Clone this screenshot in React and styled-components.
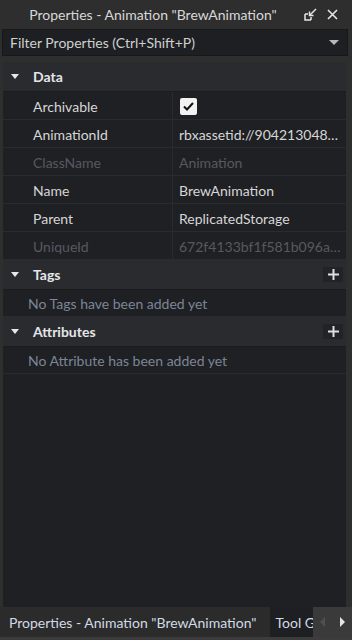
import React from 'react';
import styled, { createGlobalStyle } from 'styled-components';

const GlobalStyle = createGlobalStyle`
  html, body {
    margin: 0;
    padding: 0;
    background: #2e2e2e;
  }
  * {
    box-sizing: border-box;
  }
`;

const Panel = styled.div`
  width: 352px;
  height: 640px;
  display: flex;
  flex-direction: column;
  background: #2e2e2e;
  font-family: Lato, 'Liberation Sans', sans-serif;
  font-size: 14px;
  color: #d4d4d4;
  overflow: hidden;
`;

const TitleBar = styled.div`
  height: 29px;
  display: flex;
  align-items: center;
  padding: 0 14px 0 0;
`;

const Title = styled.div`
  flex: 1;
  text-align: center;
  color: #d8d8d8;
  white-space: nowrap;
  padding-left: 2px;
`;

const TitleButtons = styled.div`
  display: flex;
  align-items: center;
  gap: 10px;
`;

const FilterBox = styled.div`
  height: 27px;
  margin: 0 4px 0 2px;
  display: flex;
  align-items: center;
  padding: 0 8px 0 7px;
  background: #1e1f22;
  border: 1px solid #17181a;
  color: #cfcfcf;
`;

const FilterText = styled.span`
  flex: 1;
`;

const Body = styled.div`
  flex: 1;
  margin: 6px 6px 0 3px;
  background: #1f2023;
  display: flex;
  flex-direction: column;
`;

const SectionHeader = styled.div`
  height: 30px;
  display: flex;
  align-items: center;
  padding: 0 3px 0 8px;
  background: #2a2b2e;
  border-bottom: 1px solid #1b1c1f;
`;

const Caret = styled.span`
  width: 0;
  height: 0;
  border-left: 4px solid transparent;
  border-right: 4px solid transparent;
  border-top: 5px solid #e8e8e8;
  margin: 0 14px 0 0;
`;

const SectionTitle = styled.span`
  font-weight: 700;
  color: #e4e6ea;
`;

const AddButton = styled.button`
  margin-left: auto;
  width: 20px;
  height: 15px;
  border: none;
  padding: 0;
  background: #222326;
  display: flex;
  align-items: center;
  justify-content: center;
`;

const Row = styled.div`
  height: 28px;
  display: flex;
  border-bottom: 1px solid #2a2b2e;
  color: ${p => (p.$disabled ? '#555a61' : '#d6d6d6')};
`;

const NameCell = styled.div`
  width: 170px;
  display: flex;
  align-items: center;
  padding: 2px 0 0 30px;
  border-right: 1px solid #2a2b2e;
`;

const ValueCell = styled.div`
  flex: 1;
  min-width: 0;
  display: flex;
  align-items: center;
  padding: 2px 6px 0 6px;
  white-space: nowrap;
  overflow: hidden;
`;

const Checkbox = styled.span`
  width: 17px;
  height: 17px;
  background: #f2f2f2;
  border-radius: 2px;
  display: flex;
  align-items: center;
  justify-content: center;
  margin-left: 1px;
`;

const EmptyRow = styled.div`
  height: 27px;
  display: flex;
  align-items: center;
  padding: 1px 0 0 25px;
  color: #7c8597;
  border-bottom: 1px solid #2a2b2e;
`;

const TabBar = styled.div`
  height: 30px;
  display: flex;
  align-items: stretch;
  background: #2b2b2b;
`;

const Tab = styled.div`
  display: flex;
  align-items: center;
  padding: ${p => (p.$active ? '0 13px 0 9px' : '0 0 0 6px')};
  white-space: nowrap;
  overflow: hidden;
  color: #d2dae6;
  background: ${p => (p.$active ? '#2b2b2b' : '#1e1f22')};
  flex: ${p => (p.$active ? 'none' : '1')};
  min-width: 0;
`;

const TabArrows = styled.div`
  width: 39px;
  display: flex;
  align-items: center;
  justify-content: space-around;
  background: #3a3a3a;
`;

const Arrow = styled.span`
  width: 0;
  height: 0;
  border-top: 5px solid transparent;
  border-bottom: 5px solid transparent;
  ${p =>
    p.$left
      ? 'border-right: 5px solid #4f4f4f;'
      : 'border-left: 5px solid #e6e6e6;'}
`;

const BottomStrip = styled.div`
  height: 3px;
  background: #3c3c3c;
`;

const DockIcon = () => (
  <svg width="13" height="13" viewBox="0 0 13 13" fill="none" stroke="#e6e6e6" strokeWidth="1.5">
    <path d="M1 6v6h6" />
    <path d="M1 6h3M7 12V9" />
    <path d="M12 1L6 7" />
    <path d="M5.5 3.5V7.5H9.5" />
  </svg>
);

const CloseIcon = () => (
  <svg width="11" height="11" viewBox="0 0 11 11" stroke="#e6e6e6" strokeWidth="1.6">
    <path d="M1 1l9 9M10 1l-9 9" />
  </svg>
);

const DropIcon = () => (
  <svg width="10" height="6" viewBox="0 0 10 6">
    <path d="M0 0h10L5 5z" fill="#b8b8b8" />
  </svg>
);

const CheckIcon = () => (
  <svg width="11" height="9" viewBox="0 0 11 9" fill="none" stroke="#111" strokeWidth="2">
    <path d="M1 4.5l3 3L10 1" />
  </svg>
);

const PlusIcon = () => (
  <svg width="11" height="11" viewBox="0 0 11 11" stroke="#e0e0e0" strokeWidth="2">
    <path d="M5.5 0v11M0 5.5h11" />
  </svg>
);

const properties = [
  { name: 'Archivable', check: true },
  { name: 'AnimationId', value: 'rbxassetid://904213048…' },
  { name: 'ClassName', value: 'Animation', disabled: true },
  { name: 'Name', value: 'BrewAnimation' },
  { name: 'Parent', value: 'ReplicatedStorage' },
  { name: 'UniqueId', value: '672f4133bf1f581b096a…', disabled: true },
];

export default function App() {
  return (
    <>
      <GlobalStyle />
      <Panel>
        <TitleBar>
          <Title>Properties - Animation "BrewAnimation"</Title>
          <TitleButtons>
            <DockIcon />
            <CloseIcon />
          </TitleButtons>
        </TitleBar>
        <FilterBox>
          <FilterText>Filter Properties (Ctrl+Shift+P)</FilterText>
          <DropIcon />
        </FilterBox>
        <Body>
          <SectionHeader>
            <Caret />
            <SectionTitle>Data</SectionTitle>
          </SectionHeader>
          {properties.map(p => (
            <Row key={p.name} $disabled={p.disabled}>
              <NameCell>{p.name}</NameCell>
              <ValueCell>
                {p.check ? (
                  <Checkbox>
                    <CheckIcon />
                  </Checkbox>
                ) : (
                  p.value
                )}
              </ValueCell>
            </Row>
          ))}
          <SectionHeader>
            <Caret />
            <SectionTitle>Tags</SectionTitle>
            <AddButton>
              <PlusIcon />
            </AddButton>
          </SectionHeader>
          <EmptyRow>No Tags have been added yet</EmptyRow>
          <SectionHeader>
            <Caret />
            <SectionTitle>Attributes</SectionTitle>
            <AddButton>
              <PlusIcon />
            </AddButton>
          </SectionHeader>
          <EmptyRow>No Attribute has been added yet</EmptyRow>
        </Body>
        <TabBar>
          <Tab $active>Properties - Animation "BrewAnimation"</Tab>
          <Tab>Tool Grip Editor</Tab>
          <TabArrows>
            <Arrow $left />
            <Arrow />
          </TabArrows>
        </TabBar>
        <BottomStrip />
      </Panel>
    </>
  );
}
